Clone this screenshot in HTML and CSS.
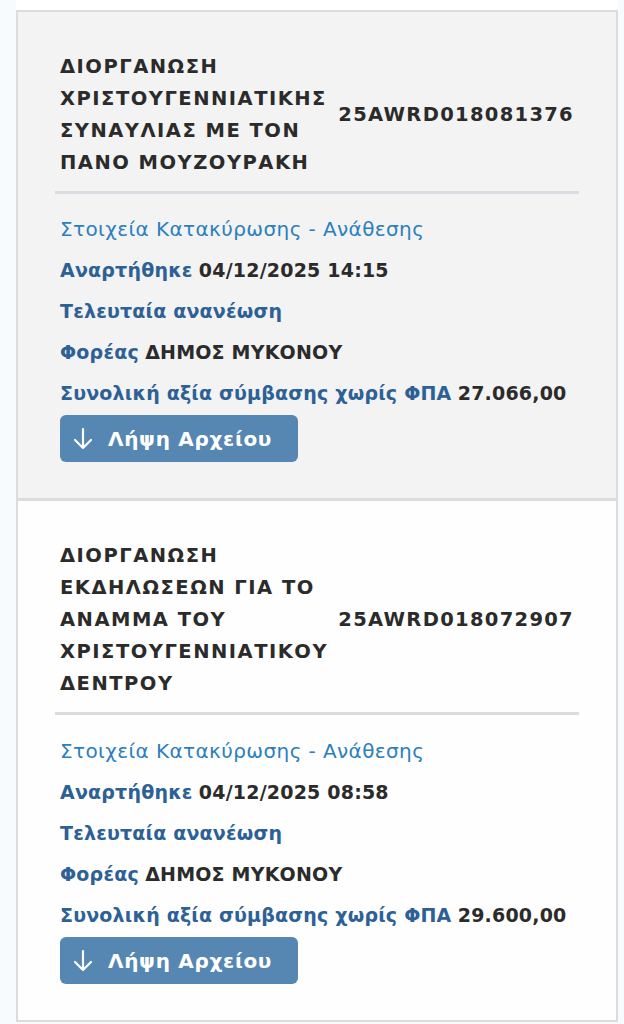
FILE: index.html
```html
<!DOCTYPE html>
<html lang="el">
<head>
<meta charset="utf-8">
<link rel="stylesheet" href="styles.css">
</head>
<body>
<div class="list">
  <div class="card card-grey">
    <div class="head">
      <div class="title">ΔΙΟΡΓΑΝΩΣΗ ΧΡΙΣΤΟΥΓΕΝΝΙΑΤΙΚΗΣ ΣΥΝΑΥΛΙΑΣ ΜΕ ΤΟΝ ΠΑΝΟ ΜΟΥΖΟΥΡΑΚΗ</div>
      <div class="code">25AWRD018081376</div>
    </div>
    <div class="body">
      <div class="row"><a class="link">Στοιχεία Κατακύρωσης - Ανάθεσης</a></div>
      <div class="row"><span class="label">Αναρτήθηκε</span> <span class="value">04/12/2025 14:15</span></div>
      <div class="row"><span class="label">Τελευταία ανανέωση</span></div>
      <div class="row"><span class="label">Φορέας</span> <span class="value">ΔΗΜΟΣ ΜΥΚΟΝΟΥ</span></div>
      <div class="row"><span class="label">Συνολική αξία σύμβασης χωρίς ΦΠΑ</span> <span class="value">27.066,00</span></div>
      <button class="btn"><svg class="ico" viewBox="0 0 20 24" width="20" height="24"><path d="M10 2 V21 M2 13 L10 21 L18 13" fill="none" stroke="#fff" stroke-width="2.2" stroke-linecap="round" stroke-linejoin="round"/></svg><span>Λήψη Αρχείου</span></button>
    </div>
  </div>
  <div class="card card-white">
    <div class="head">
      <div class="title">ΔΙΟΡΓΑΝΩΣΗ ΕΚΔΗΛΩΣΕΩΝ ΓΙΑ ΤΟ ΑΝΑΜΜΑ ΤΟΥ ΧΡΙΣΤΟΥΓΕΝΝΙΑΤΙΚΟΥ ΔΕΝΤΡΟΥ</div>
      <div class="code">25AWRD018072907</div>
    </div>
    <div class="body">
      <div class="row"><a class="link">Στοιχεία Κατακύρωσης - Ανάθεσης</a></div>
      <div class="row"><span class="label">Αναρτήθηκε</span> <span class="value">04/12/2025 08:58</span></div>
      <div class="row"><span class="label">Τελευταία ανανέωση</span></div>
      <div class="row"><span class="label">Φορέας</span> <span class="value">ΔΗΜΟΣ ΜΥΚΟΝΟΥ</span></div>
      <div class="row"><span class="label">Συνολική αξία σύμβασης χωρίς ΦΠΑ</span> <span class="value">29.600,00</span></div>
      <button class="btn"><svg class="ico" viewBox="0 0 20 24" width="20" height="24"><path d="M10 2 V21 M2 13 L10 21 L18 13" fill="none" stroke="#fff" stroke-width="2.2" stroke-linecap="round" stroke-linejoin="round"/></svg><span>Λήψη Αρχείου</span></button>
    </div>
  </div>
</div>
</body>
</html>
```
FILE: styles.css
```css
html, body {
  margin: 0;
  padding: 0;
}
body {
  background: #f7fbfe;
  font-family: "DejaVu Sans", Verdana, sans-serif;
  color: #333;
  width: 624px;
  height: 1024px;
  overflow: hidden;
}
.list {
  margin-left: 16px;
  margin-right: 6px;
  padding-top: 10px;
  background: #fff;
}
.card {
  border: 2px solid #dcdcdc;
  padding: 39px 37px 36px 37px;
}
.card + .card {
  border-top: 1px solid #dcdcdc;
  padding-top: 39px;
  padding-bottom: 36px;
}
.card-grey {
  background: #f3f3f3;
}
.card-white {
  background: #fefefe;
}
.head {
  display: flex;
  align-items: center;
  gap: 6px;
  padding: 0 5px 12px 5px;
  border-bottom: 3px solid #d9dde1;
}
.title {
  flex: 1;
  min-width: 0;
  font-weight: bold;
  font-size: 19.5px;
  letter-spacing: 1.5px;
  line-height: 32px;
  color: #2b2b2b;
}
.code {
  font-weight: bold;
  font-size: 19.5px;
  letter-spacing: 1.3px;
  line-height: 32px;
  color: #2b2b2b;
  white-space: nowrap;
}
.body {
  padding: 15px 5px 0 5px;
}
.card + .card .body {
  padding-top: 16px;
}
.row {
  font-size: 19px;
  letter-spacing: 0.2px;
  line-height: 41px;
}
.link {
  color: #2c7fbd;
  font-size: 20px;
  letter-spacing: 0.4px;
}
.label {
  color: #2d6196;
  font-weight: bold;
}
.value {
  color: #2b2b2b;
  font-weight: bold;
}
.btn {
  display: flex;
  align-items: center;
  gap: 15px;
  margin-top: 1px;
  width: 238px;
  height: 47px;
  padding: 0 13px;
  border: none;
  border-radius: 6px;
  background: #5587b2;
  color: #fff;
  font-family: "DejaVu Sans", Verdana, sans-serif;
  font-weight: bold;
  font-size: 20px;
  letter-spacing: 0.7px;
}
.ico {
  display: block;
}
```
